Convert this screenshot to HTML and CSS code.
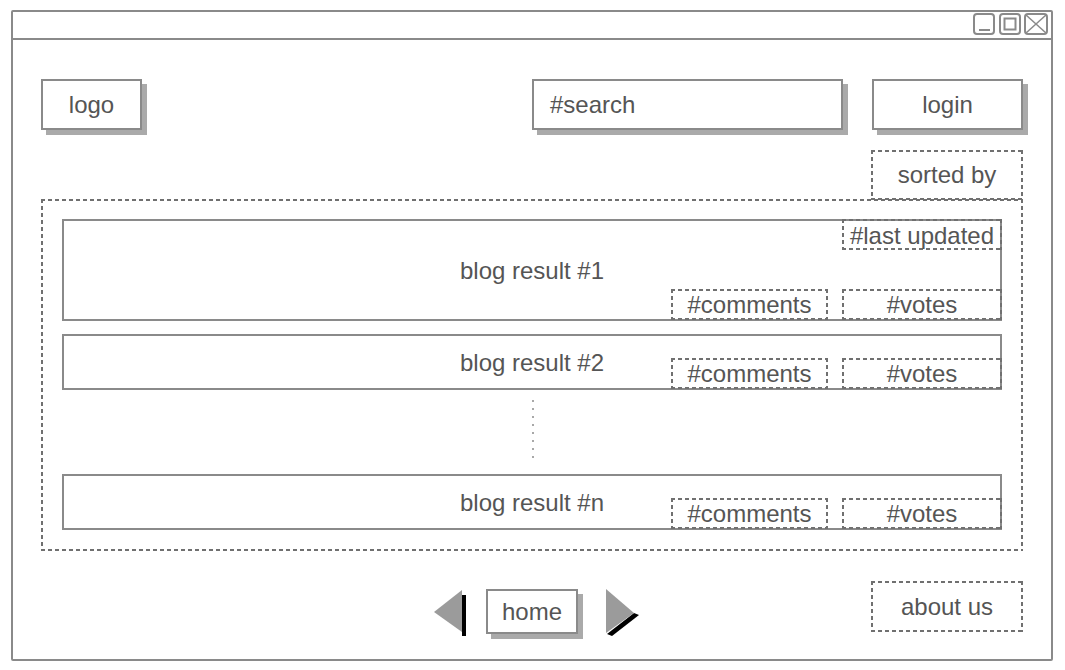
FILE: index.html
```html
<!DOCTYPE html>
<html lang="en">
<head>
<meta charset="utf-8">
<title>Blog search wireframe</title>
<link rel="stylesheet" href="styles.css">
</head>
<body>
<div class="window">
  <div class="titlebar">
    <svg class="controls" width="76" height="22" viewBox="0 0 76 22" aria-hidden="true">
      <g fill="none" stroke="#8a8a8a" stroke-width="2">
        <rect x="2" y="1" width="20" height="20" rx="3"/>
        <line x1="7" y1="17" x2="18" y2="17"/>
        <rect x="28" y="1" width="20" height="20" rx="3"/>
        <rect x="32.5" y="5.5" width="11" height="11"/>
        <rect x="53" y="1" width="22" height="20" rx="3"/>
      </g>
      <g stroke="#8a8a8a" stroke-width="1.5">
        <line x1="54" y1="2" x2="74" y2="20"/>
        <line x1="74" y1="2" x2="54" y2="20"/>
      </g>
    </svg>
  </div>
  <div class="content">
    <header class="top">
      <div class="box logo">logo</div>
      <div class="box search">#search</div>
      <div class="box login">login</div>
    </header>
    <div class="sortrow">
      <div class="dashed sorted">sorted by</div>
    </div>
    <section class="dashed results">
      <div class="result tall">
        <span class="title">blog result #1</span>
        <span class="dashed tag updated">#last updated</span>
        <div class="tags"><span class="dashed tag comments">#comments</span><span class="dashed tag votes">#votes</span></div>
      </div>
      <div class="result">
        <span class="title">blog result #2</span>
        <div class="tags"><span class="dashed tag comments">#comments</span><span class="dashed tag votes">#votes</span></div>
      </div>
      <div class="more"><span class="vdots"></span></div>
      <div class="result">
        <span class="title">blog result #n</span>
        <div class="tags"><span class="dashed tag comments">#comments</span><span class="dashed tag votes">#votes</span></div>
      </div>
    </section>
    <footer class="bottom">
      <svg class="arrow prev" width="32" height="48" viewBox="0 0 32 48" aria-hidden="true">
        <polygon points="0,23 28,1 28,43" fill="#9b9b9b"/>
        <rect x="28" y="6" width="4" height="41" fill="#000"/>
      </svg>
      <div class="box home">home</div>
      <div class="rightside">
        <svg class="arrow next" width="35" height="49" viewBox="0 0 35 49" aria-hidden="true">
          <polygon points="29,25 34,27 7,48 2,46" fill="#000"/>
          <polygon points="1,1 29,25 1,45" fill="#9b9b9b"/>
        </svg>
        <div class="dashed about">about us</div>
      </div>
    </footer>
  </div>
</div>
</body>
</html>
```

FILE: styles.css
```css
* {
  box-sizing: border-box;
}

body {
  margin: 0;
  padding: 10px 0 0 11px;
  background: #fff;
  font-family: "Liberation Sans", Arial, sans-serif;
  font-size: 24px;
  color: #555;
}

.window {
  width: 1042px;
  height: 651px;
  border: 2px solid #8a8a8a;
  border-radius: 2px;
  display: flex;
  flex-direction: column;
}

.titlebar {
  height: 28px;
  border-bottom: 2px solid #8a8a8a;
  display: flex;
  justify-content: flex-end;
  align-items: flex-start;
  padding: 1px 3px 0 0;
}

.controls {
  display: block;
}

.content {
  padding: 39px 28px 0 28px;
}

.top {
  display: flex;
  height: 51px;
}

.box {
  border: 2px solid #8a8a8a;
  box-shadow: 5px 5px 0 #aaa;
  background: #fff;
  display: flex;
  align-items: center;
  justify-content: center;
  line-height: 1;
}

.logo {
  width: 101px;
}

.search {
  width: 311px;
  margin-left: auto;
  justify-content: flex-start;
  padding-left: 16px;
}

.login {
  width: 151px;
  margin-left: 29px;
}

.dashed {
  --dash: #707070;
  background:
    repeating-linear-gradient(90deg, var(--dash) 0 4px, transparent 4px 7px) left top / 100% 2px no-repeat,
    repeating-linear-gradient(90deg, var(--dash) 0 4px, transparent 4px 7px) left bottom / 100% 2px no-repeat,
    repeating-linear-gradient(180deg, var(--dash) 0 4px, transparent 4px 7px) left top / 2px 100% no-repeat,
    repeating-linear-gradient(180deg, var(--dash) 0 4px, transparent 4px 7px) right top / 2px 100% no-repeat;
  display: flex;
  align-items: center;
  justify-content: center;
  line-height: 1;
}

.sortrow {
  display: flex;
  justify-content: flex-end;
  margin-top: 20px;
}

.sorted {
  width: 152px;
  height: 50px;
  margin-bottom: -1px;
}

.results {
  padding: 20px 21px 21px;
  display: flex;
  flex-direction: column;
  align-items: stretch;
  justify-content: flex-start;
}

.result {
  display: grid;
  height: 56px;
  border: 2px solid #8a8a8a;
}

.result.tall {
  height: 102px;
  margin-bottom: 13px;
}

.result > * {
  grid-area: 1 / 1;
}

.title {
  align-self: center;
  justify-self: center;
  line-height: 1;
  margin-top: 1px;
}

.tags {
  align-self: end;
  justify-self: end;
  display: flex;
  gap: 14px;
  margin: 0 -2px -1px 0;
}

.tag {
  height: 31px;
}

.comments {
  width: 157px;
}

.votes {
  width: 160px;
}

.updated {
  align-self: start;
  justify-self: end;
  width: 160px;
  margin: -2px -2px 0 0;
  padding-top: 2px;
}

.more {
  height: 84px;
  display: flex;
  justify-content: center;
  padding-top: 10px;
}

.vdots {
  width: 2px;
  height: 60px;
  margin-left: 1px;
  background-image: linear-gradient(to bottom, #a8a8a8 0 2px, transparent 2px 8px);
  background-size: 2px 8px;
}

.bottom {
  display: grid;
  grid-template-columns: 1fr auto 1fr;
  align-items: start;
  margin-top: 30px;
}

.arrow {
  display: block;
}

.prev {
  justify-self: end;
  margin: 8px 20px 0 0;
}

.home {
  width: 92px;
  height: 45px;
  margin-top: 8px;
}

.rightside {
  display: flex;
  align-items: flex-start;
}

.next {
  margin: 7px 0 0 27px;
}

.about {
  width: 152px;
  height: 51px;
  margin-left: auto;
}
```
